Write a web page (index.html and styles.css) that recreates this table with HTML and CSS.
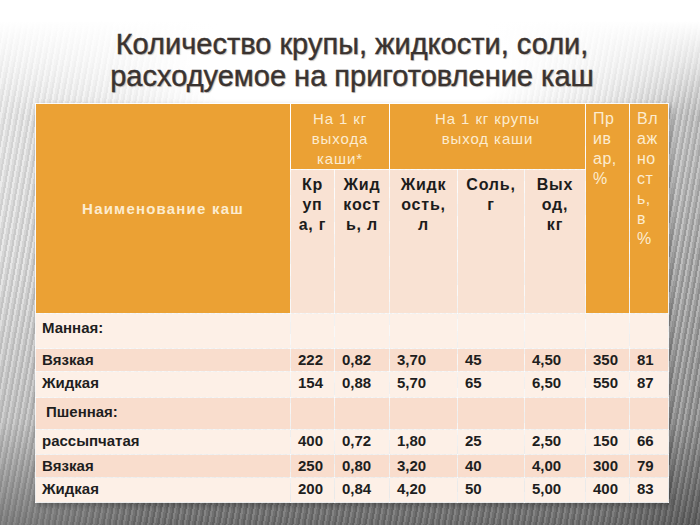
FILE: index.html
```html
<!DOCTYPE html>
<html lang="ru">
<head>
<meta charset="utf-8">
<title>Количество крупы, жидкости, соли</title>
<link rel="stylesheet" href="styles.css">
</head>
<body>
<div class="page">
  <h1 class="title">Количество крупы, жидкости, соли,<br>расходуемое на приготовление каш</h1>
  <table class="grid">
    <colgroup>
      <col class="c-name"><col class="c2"><col class="c3"><col class="c4"><col class="c5"><col class="c6"><col class="c7"><col class="c8">
    </colgroup>
    <thead>
      <tr class="h1">
        <th rowspan="2" class="name">Наименование каш</th>
        <th colspan="2" class="grp">На 1 кг<br>выхода<br>каши*</th>
        <th colspan="3" class="grp">На 1 кг крупы<br>выход каши</th>
        <th rowspan="2" class="narrow">Пр<br>ив<br>ар,<br>%</th>
        <th rowspan="2" class="narrow">Вл<br>аж<br>но<br>ст<br>ь,<br>в<br>%</th>
      </tr>
      <tr class="h2">
        <th class="sub">Кр<br>уп<br>а, г</th>
        <th class="sub">Жид<br>кост<br>ь, л</th>
        <th class="sub">Жидк<br>ость,<br>л</th>
        <th class="sub">Соль,<br>г</th>
        <th class="sub">Вых<br>од,<br>кг</th>
      </tr>
    </thead>
    <tbody>
      <tr class="light sec r1"><td>Манная:</td><td></td><td></td><td></td><td></td><td></td><td></td><td></td></tr>
      <tr class="dark r2"><td>Вязкая</td><td>222</td><td>0,82</td><td>3,70</td><td>45</td><td>4,50</td><td>350</td><td>81</td></tr>
      <tr class="light r3"><td>Жидкая</td><td>154</td><td>0,88</td><td>5,70</td><td>65</td><td>6,50</td><td>550</td><td>87</td></tr>
      <tr class="dark sec r4"><td class="indent">Пшенная:</td><td></td><td></td><td></td><td></td><td></td><td></td><td></td></tr>
      <tr class="light r5"><td>рассыпчатая</td><td>400</td><td>0,72</td><td>1,80</td><td>25</td><td>2,50</td><td>150</td><td>66</td></tr>
      <tr class="dark r6"><td>Вязкая</td><td>250</td><td>0,80</td><td>3,20</td><td>40</td><td>4,00</td><td>300</td><td>79</td></tr>
      <tr class="light r7"><td>Жидкая</td><td>200</td><td>0,84</td><td>4,20</td><td>50</td><td>5,00</td><td>400</td><td>83</td></tr>
    </tbody>
  </table>
</div>
</body>
</html>
```
FILE: styles.css
```css
html, body {
  margin: 0;
  padding: 0;
}
body {
  width: 700px;
  height: 525px;
  overflow: hidden;
  font-family: "Liberation Sans", Arial, sans-serif;
  background:
    radial-gradient(ellipse 50% 28% at 50% 12%, #ffffff 45%, rgba(255,255,255,0) 100%),
    linear-gradient(to bottom, #ffffff 0, #ffffff 4%, rgba(255,255,255,0.75) 11%, rgba(255,255,255,0.3) 22%, rgba(255,255,255,0.05) 50%, rgba(0,0,0,0.1) 80%, rgba(0,0,0,0.42) 100%),
    linear-gradient(to right, rgba(255,255,255,0.4) 0, rgba(255,255,255,0) 22%, rgba(255,255,255,0) 84%, rgba(0,0,0,0.15) 100%),
    repeating-linear-gradient(100deg, #a2a2a2 0 2px, #d6d6d6 2px 4px, #b8b8b8 4px 6px);
}
.page {
  width: 700px;
  height: 525px;
  display: flex;
  flex-direction: column;
  align-items: flex-start;
}
.title {
  align-self: stretch;
  margin: 0;
  padding: 28px 0 0 4px;
  height: 80px;
  box-sizing: border-box;
  text-align: center;
  font-family: "Liberation Sans Narrow", "Liberation Sans", "DejaVu Sans Condensed", sans-serif;
  font-stretch: condensed;
  font-weight: normal;
  font-size: 29px;
  line-height: 32px;
  color: #3a3330;
  -webkit-text-stroke: 0.4px #3a3330;
  text-shadow: 1px 1px 1px rgba(110,100,90,0.4);
}
.grid {
  margin: 23px 0 0 35px;
  width: 633px;
  table-layout: fixed;
  border-collapse: collapse;
  box-shadow: 2px 3px 6px rgba(0,0,0,0.28);
}
.c-name { width: 255px; }
.c2 { width: 44px; }
.c3 { width: 55px; }
.c4 { width: 68px; }
.c5 { width: 67px; }
.c6 { width: 61px; }
.c7 { width: 44px; }
.c8 { width: 39px; }

.grid th, .grid td {
  border: 1px solid rgba(255,255,255,0.85);
  padding: 0;
  overflow: hidden;
}
.grid th {
  vertical-align: top;
  font-size: 15px;
  line-height: 20px;
}
.h1 { height: 65px; }
.h2 { height: 144px; }
.h1 th {
  background: #eba134;
  color: #fcecd0;
  font-weight: normal;
  padding-top: 5px;
  text-align: center;
  letter-spacing: 0.9px;
}
.h1 th.name {
  vertical-align: middle;
  font-weight: bold;
  padding-top: 0;
  letter-spacing: 1.2px;
}
.h1 th.narrow {
  text-align: left;
  padding-left: 7px;
  font-size: 16px;
  letter-spacing: 0.5px;
}
.h2 th.sub {
  background: #f9e2d3;
  color: #1c1c1c;
  font-weight: bold;
  font-size: 16px;
  letter-spacing: 0.8px;
  text-align: center;
  padding-top: 5px;
}
.grid td {
  font-size: 15px;
  line-height: 18px;
  font-weight: bold;
  color: #1e1e1e;
  vertical-align: top;
  padding: 2px 0 0 7px;
  white-space: nowrap;
}
.grid td:first-child { padding-left: 6px; }
.grid td.indent { padding-left: 10px; }
.grid tr.sec td { padding-top: 5px; }
.light td { background: #fdf0e7; }
.dark td { background: #f9ddcd; }
.r1 { height: 35px; }
.r2 { height: 23px; }
.r3 { height: 26px; }
.r4 { height: 32px; }
.r5 { height: 25px; }
.r6 { height: 23px; }
.r7 { height: 25px; }
```
